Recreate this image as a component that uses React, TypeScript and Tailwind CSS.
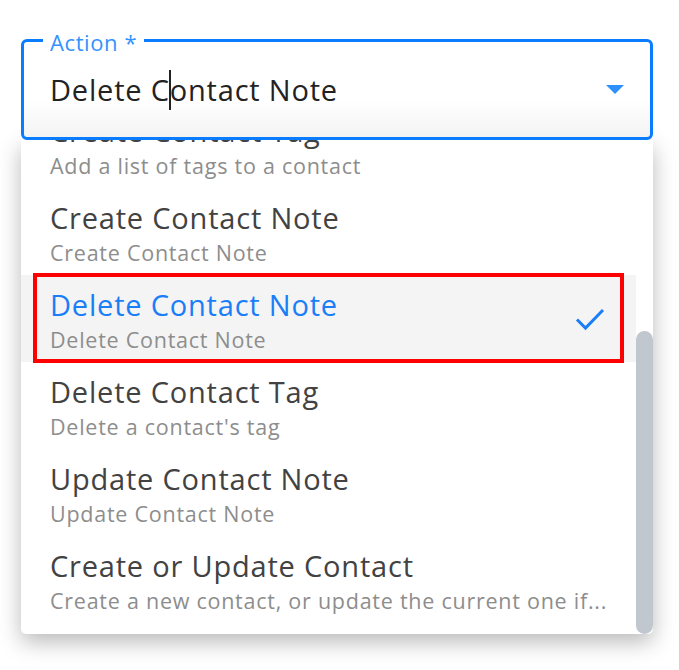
const items = [
  { title: "Create Contact Tag", sub: "Add a list of tags to a contact" },
  { title: "Create Contact Note", sub: "Create Contact Note" },
  { title: "Delete Contact Note", sub: "Delete Contact Note", selected: true },
  { title: "Delete Contact Tag", sub: "Delete a contact's tag" },
  { title: "Update Contact Note", sub: "Update Contact Note" },
  { title: "Create or Update Contact", sub: "Create a new contact, or update the current one if..." },
];

function Option({ title, sub, selected }: { title: string; sub: string; selected?: boolean }) {
  return (
    <div className={"relative flex h-[87px] items-center justify-between pl-[29px] " + (selected ? "bg-[#f4f4f4]" : "")}>
      <div className="min-w-0 flex-1 pt-[3px]">
        <p className={"whitespace-nowrap text-[29px] leading-[36px] tracking-[0.8px] " + (selected ? "text-[#1a7ef7]" : "text-[#424242]")}>{title}</p>
        <p className="mt-[4px] whitespace-nowrap text-[21.5px] leading-[26px] tracking-[0.75px] text-[#8d8d8d]">{sub}</p>
      </div>
      {selected ? (
        <>
          <svg className="mr-[30px] h-[24px] w-[32px] shrink-0" viewBox="0 0 32 24" fill="none">
            <path d="M3 12.5l8.5 8.5L29 3" stroke="#1a7ef7" strokeWidth="3" />
          </svg>
          <span className="pointer-events-none absolute top-[-2px] right-[12px] bottom-[-1px] left-[12px] border-4 border-[#ff0000]" />
        </>
      ) : null}
    </div>
  );
}

export default function App() {
  return (
    <div className="h-[670px] w-full bg-white font-['Open_Sans',sans-serif]">
      <div className="ml-[21px] w-[632px] pt-[39px]">
        <div className="relative z-10 flex h-[101px] items-center justify-between rounded-[6px] border-[3px] border-[#0a7cff] bg-[linear-gradient(to_bottom,#fff_62%,#f3f3f3)] pr-[26px] pl-[26px]">
          <span className="absolute top-[-13px] left-[19px] bg-white px-[7px] text-[22px] leading-[26px] tracking-[0.6px] text-[#3392ff]">Action *</span>
          <span className="mb-[10px] whitespace-nowrap text-[29px] leading-[36px] tracking-[0.8px] text-[#222]">
            Delete C<span className="mx-[-1px] inline-block h-[40px] w-[2px] translate-y-[9px] bg-[#222]" />ontact Note
          </span>
          <svg className="h-[9px] w-[18px]" viewBox="0 0 18 9">
            <path d="M0 0h18L9 9z" fill="#2e8fff" />
          </svg>
        </div>
        <div className="flex h-[494px] overflow-hidden rounded-b-[5px] bg-white shadow-[0_8px_22px_rgba(0,0,0,0.28)]">
          <div className="-mt-[39px] min-w-0 flex-1 overflow-hidden">
            {items.map((it) => (
              <Option key={it.title} {...it} />
            ))}
          </div>
          <div className="w-[17px] shrink-0 pt-[191px]">
            <div className="h-[303px] rounded-[9px] bg-[#c1c7cf]" />
          </div>
        </div>
      </div>
    </div>
  );
}
